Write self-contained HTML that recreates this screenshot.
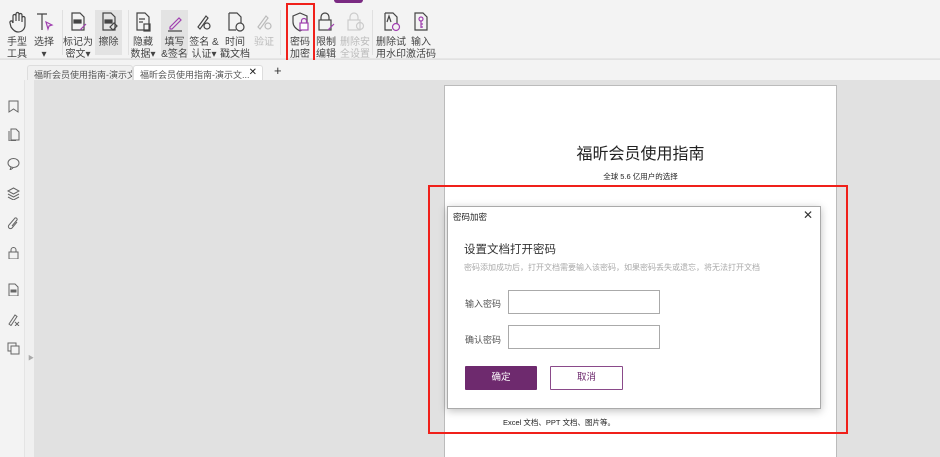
<!DOCTYPE html>
<html><head><meta charset="utf-8"><style>
*{margin:0;padding:0;box-sizing:border-box}
html,body{width:940px;height:457px;overflow:hidden}
body{background:#e1e1e1;font-family:"Liberation Sans","Noto Sans CJK SC",sans-serif;position:relative;color:#333}
.tb{position:absolute;left:0;top:0;width:940px;height:59px;background:#f3f3f3;border-bottom:1px solid #e6e6e6}
.tabs{position:absolute;left:0;top:60px;width:940px;height:20px;background:#f3f3f3}
.side{position:absolute;left:0;top:80px;width:34px;height:377px;background:#f0f0f0}
.side0{position:absolute;left:0;top:0;width:25px;height:377px;background:#f3f3f3;border-right:1px solid #e4e4e4}
.btn{position:absolute;top:11px;width:30px;text-align:center;font-size:10px;line-height:11.5px;color:#444;white-space:nowrap}
.btn svg{display:block;margin:0 auto 4px}
.hl{background:#e3e3e3}
.dis{color:#bbb}
.sep{position:absolute;top:10px;width:1px;height:45px;background:#e0e0e0}
.tab{position:absolute;top:65px;height:15px;font-size:9px;color:#555;padding:2px 6px;border:1px solid #ddd;border-bottom:none;border-radius:3px 3px 0 0;background:#f0f0f0;white-space:nowrap;overflow:hidden}
.page{position:absolute;left:444px;top:85px;width:393px;height:380px;background:#fff;border:1px solid #bbb}
.red{position:absolute;border:2px solid #f0201a}
.dlg{position:absolute;left:447px;top:206px;width:374px;height:203px;background:#fff;border:1px solid #aaa;box-shadow:0 2px 8px rgba(0,0,0,.25)}
.inp{position:absolute;left:60px;width:152px;height:24px;border:1px solid #aaa}
.sicon{position:absolute;left:7px;width:13px;height:13px}
</style></head><body>
<div class="tb">
 <div class="btn" style="left:2px"><svg width="20" height="22" viewBox="0 0 20 22" fill="none" stroke="#444" stroke-width="1.2"><path d="M6 12V5a1.5 1.5 0 013 0v5V3a1.5 1.5 0 013 0v7V4a1.5 1.5 0 013 0v7V7a1.5 1.5 0 013 0v7c0 4-3 7-7 7-3 0-5-2-7-5L3 12a1.5 1.5 0 012-2l1 2"/></svg>手型<br>工具</div>
 <div class="btn" style="left:29px"><svg width="20" height="22" viewBox="0 0 20 22" fill="none" stroke="#444" stroke-width="1.2"><path d="M3 3h10M8 3v16"/><path d="M12 11l6 3-3 1-1 3z" stroke="#a040b0"/></svg>选择<br>▾</div>
 <div class="sep" style="left:62px"></div>
 <div class="btn" style="left:63px"><svg width="20" height="22" viewBox="0 0 20 22" fill="none" stroke="#444" stroke-width="1.2"><path d="M4 2h8l4 4v13H4z"/><rect x="6" y="9" width="7" height="3" fill="#444"/><path d="M12 19l6-6" stroke="#a040b0"/></svg>标记为<br>密文▾</div>
 <div class="btn hl" style="left:95px;top:10px;padding-top:1px;height:45px;width:27px"><svg width="20" height="22" viewBox="0 0 20 22" fill="none" stroke="#444" stroke-width="1.2"><path d="M4 2h8l4 4v13H4z"/><rect x="6" y="9" width="7" height="3" fill="#444"/><path d="M11 16l4-4 3 3-4 4z"/></svg>擦除</div>
 <div class="sep" style="left:128px"></div>
 <div class="btn" style="left:128px"><svg width="20" height="22" viewBox="0 0 20 22" fill="none" stroke="#444" stroke-width="1.2"><path d="M4 2h8l4 4v13H4z"/><path d="M6 8h6M6 11h4"/><rect x="11" y="13" width="6" height="7"/></svg>隐藏<br>数据▾</div>
 <div class="btn hl" style="left:161px;top:10px;padding-top:1px;height:45px;width:27px"><svg width="20" height="22" viewBox="0 0 20 22" fill="none" stroke="#a040b0" stroke-width="1.2"><path d="M5 16l9-9 2 2-9 9H5z"/><path d="M3 20h14" stroke="#444"/></svg>填写<br>&amp;签名</div>
 <div class="btn" style="left:189px"><svg width="20" height="22" viewBox="0 0 20 22" fill="none" stroke="#444" stroke-width="1.2"><path d="M4 16l8-11 2 2-8 11z"/><circle cx="13" cy="15" r="3"/></svg>签名 &amp;<br>认证▾</div>
 <div class="btn" style="left:220px"><svg width="20" height="22" viewBox="0 0 20 22" fill="none" stroke="#444" stroke-width="1.2"><path d="M4 2h8l4 4v6M4 2v17h7"/><circle cx="15" cy="16" r="4"/></svg>时间<br>戳文档</div>
 <div class="btn dis" style="left:249px"><svg width="20" height="22" viewBox="0 0 20 22" fill="none" stroke="#bbb" stroke-width="1.2"><path d="M4 16l8-11 2 2-8 11z"/><circle cx="14" cy="15" r="3"/></svg>验证</div>
 <div class="sep" style="left:280px"></div>
 <div class="btn" style="left:285px"><svg width="20" height="22" viewBox="0 0 20 22" fill="none" stroke="#444" stroke-width="1.2"><path d="M10 2l7 3v6c0 4-3 7-7 9-4-2-7-5-7-9V5z"/><rect x="10" y="12" width="8" height="7" fill="#fff" stroke="#a040b0"/><path d="M11.5 12v-2a2.5 2.5 0 015 0v2" stroke="#a040b0"/></svg>密码<br>加密</div>
 <div class="btn" style="left:311px"><svg width="20" height="22" viewBox="0 0 20 22" fill="none" stroke="#444" stroke-width="1.2"><rect x="3" y="9" width="12" height="10"/><path d="M5 9V6a4 4 0 018 0v3"/><path d="M12 19l6-6" stroke="#a040b0"/></svg>限制<br>编辑</div>
 <div class="btn dis" style="left:340px"><svg width="20" height="22" viewBox="0 0 20 22" fill="none" stroke="#ccc" stroke-width="1.2"><rect x="3" y="9" width="12" height="10"/><path d="M5 9V6a4 4 0 018 0v3"/><circle cx="15" cy="15" r="3.5"/></svg>删除安<br>全设置</div>
 <div class="sep" style="left:372px"></div>
 <div class="btn" style="left:376px"><svg width="20" height="22" viewBox="0 0 20 22" fill="none" stroke="#444" stroke-width="1.2"><path d="M4 2h8l4 4v7M4 2v17h7"/><path d="M6 11l2-6 2 6"/><circle cx="15" cy="16" r="3.5" stroke="#a040b0"/></svg>删除试<br>用水印</div>
 <div class="btn" style="left:406px"><svg width="20" height="22" viewBox="0 0 20 22" fill="none" stroke="#444" stroke-width="1.2"><path d="M4 2h8l4 4v13H4z"/><circle cx="10" cy="8" r="2" stroke="#a040b0"/><path d="M10 10v7M10 13h2M10 16h2" stroke="#a040b0"/></svg>输入<br>激活码</div>
 <div style="position:absolute;left:334px;top:0;width:29px;height:3px;background:#7a2a82;border-radius:0 0 4px 4px"></div>
</div>
<div class="red" style="left:286px;top:3px;width:29px;height:59px"></div>
<div class="tabs"></div>
<div class="tab" style="left:27px;width:106px">福昕会员使用指南-演示文...</div>
<div class="tab" style="left:133px;width:130px;background:#fff;padding-right:18px">福昕会员使用指南-演示文...<span style="position:absolute;right:5px;top:1px;font-size:10px;color:#222">✕</span></div>
<div style="position:absolute;left:274px;top:63px;font-size:13px;color:#333">+</div>
<div class="side"><div class="side0">
 <svg class="sicon" style="top:20px" viewBox="0 0 13 13" fill="none" stroke="#666"><path d="M2 1h9v11l-4.5-3L2 12z"/></svg>
 <svg class="sicon" style="top:48px" viewBox="0 0 13 13" fill="none" stroke="#666"><path d="M4 1h5l3 3v8H4zM2 3v10h7"/></svg>
 <svg class="sicon" style="top:77px" viewBox="0 0 13 13" fill="none" stroke="#666"><ellipse cx="6.5" cy="6" rx="5.5" ry="4.5"/><path d="M4 10l-1 3 3-2"/></svg>
 <svg class="sicon" style="top:107px" viewBox="0 0 13 13" fill="none" stroke="#666"><path d="M1 4l5.5-3 5.5 3-5.5 3zM1 7l5.5 3 5.5-3M1 10l5.5 3 5.5-3"/></svg>
 <svg class="sicon" style="top:137px" viewBox="0 0 13 13" fill="none" stroke="#666"><path d="M10 5l-5 6a2 2 0 01-3-3l6-7a1.5 1.5 0 012 2l-5 6"/></svg>
 <svg class="sicon" style="top:166px" viewBox="0 0 13 13" fill="none" stroke="#666"><rect x="2" y="6" width="9" height="7"/><path d="M4 6V4a2.5 2.5 0 015 0v2"/></svg>
 <svg class="sicon" style="top:203px" viewBox="0 0 13 13" fill="none" stroke="#666"><path d="M2 1h6l3 3v9H2z"/><rect x="4" y="7" width="5" height="2" fill="#666"/></svg>
 <svg class="sicon" style="top:233px" viewBox="0 0 13 13" fill="none" stroke="#666"><path d="M2 11l6-9 2 1.5-6 9z"/><path d="M8 9l4 4M12 9l-4 4"/></svg>
 <svg class="sicon" style="top:262px" viewBox="0 0 13 13" fill="none" stroke="#666"><rect x="1" y="1" width="8" height="8"/><rect x="4" y="4" width="8" height="8" fill="#f3f3f3"/></svg>
</div>
 <div style="position:absolute;left:28px;top:273px;font-size:6px;color:#aaa">▶</div>
</div>
<div class="page">
 <div style="position:absolute;top:54px;width:100%;text-align:center;font-size:16px;color:#222">福昕会员使用指南</div>
 <div style="position:absolute;top:85px;width:100%;text-align:center;font-size:7.5px;color:#222">全球 5.6 亿用户的选择</div>
 <div style="position:absolute;left:58px;top:331px;font-size:7.5px;color:#222">Excel 文档、PPT 文档、图片等。</div>
</div>
<div class="red" style="left:428px;top:185px;width:420px;height:249px"></div>
<div class="dlg">
 <div style="position:absolute;left:5px;top:4px;font-size:8.5px;color:#222">密码加密</div>
 <div style="position:absolute;right:7px;top:1px;font-size:12px;color:#333">✕</div>
 <div style="position:absolute;left:16px;top:34px;font-size:11.5px;color:#333">设置文档打开密码</div>
 <div style="position:absolute;left:16px;top:55px;font-size:8px;color:#aaa">密码添加成功后，打开文档需要输入该密码，如果密码丢失或遗忘，将无法打开文档</div>
 <div style="position:absolute;left:17px;top:90px;font-size:9px;color:#555">输入密码</div>
 <div class="inp" style="top:83px"></div>
 <div style="position:absolute;left:17px;top:126px;font-size:9px;color:#555">确认密码</div>
 <div class="inp" style="top:118px"></div>
 <div style="position:absolute;left:17px;top:159px;width:72px;height:24px;background:#6e2a6e;color:#fff;font-size:9.5px;text-align:center;line-height:24px;border-radius:1px">确定</div>
 <div style="position:absolute;left:102px;top:159px;width:73px;height:24px;border:1px solid #8a4a8a;color:#6e2a6e;font-size:9.5px;text-align:center;line-height:22px;border-radius:1px">取消</div>
</div>
</body></html>
